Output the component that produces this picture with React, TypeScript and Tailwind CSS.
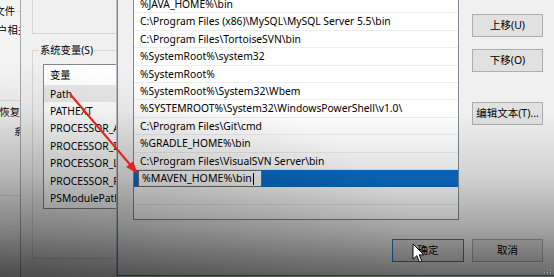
import React from 'react';

const paths = [
  '%JAVA_HOME%\\bin',
  'C:\\Program Files (x86)\\MySQL\\MySQL Server 5.5\\bin',
  'C:\\Program Files\\TortoiseSVN\\bin',
  '%SystemRoot%\\system32',
  '%SystemRoot%',
  '%SystemRoot%\\System32\\Wbem',
  '%SYSTEMROOT%\\System32\\WindowsPowerShell\\v1.0\\',
  'C:\\Program Files\\Git\\cmd',
  '%GRADLE_HOME%\\bin',
  'C:\\Program Files\\VisualSVN Server\\bin',
];

const sysVars = ['Path', 'PATHEXT', 'PROCESSOR_ARCHITECTURE', 'PROCESSOR_IDENTIFIER', 'PROCESSOR_LEVEL', 'PROCESSOR_REVISION', 'PSModulePath'];

function WinButton({ label, width = 'w-[71px]', focused = false }: { label: string; width?: string; focused?: boolean }) {
  return (
    <div
      className={`flex h-[23px] ${width} items-center justify-center border bg-[#e1e1e1] text-[10.5px] text-black ${
        focused ? 'border-[#2f7ccf]' : 'border-[#adadad]'
      }`}
    >
      {label}
    </div>
  );
}

export default function App() {
  return (
    <div className="relative h-[277px] w-[554px] overflow-hidden bg-[#f0f0f0] font-['Noto_Sans','Noto_Sans_CJK_SC',sans-serif] text-[10.3px] leading-none text-black">
      {/* back window: system properties */}
      <div className="absolute left-0 top-0 flex h-full w-[20px] flex-col overflow-hidden bg-[#f4f4f4]">
        <div className="mt-[4px] flex h-[14px] items-center justify-end">
          <span className="whitespace-nowrap">用户配置文件</span>
          <div className="ml-[2px] h-px w-[3px] shrink-0 bg-[#dcdcdc]" />
        </div>
        <div className="mt-[5px] flex h-[14px] items-center justify-end">
          <span className="-mr-[8px] whitespace-nowrap">用户相关</span>
        </div>
        <div className="mt-[63px] h-px w-full bg-[#dcdcdc]" />
        <div className="mt-[4px] flex h-[14px] items-center justify-end">
          <span className="whitespace-nowrap">启动和故障恢复</span>
        </div>
        <div className="mt-[5px] flex h-[14px] items-center">
          <span className="ml-[14px] whitespace-nowrap text-[9px]">系统失败</span>
        </div>
        <div className="mt-[57px] h-px w-full bg-[#dcdcdc]" />
      </div>

      {/* middle window: environment variables */}
      <div className="absolute left-[20px] top-0 flex h-full w-[110px] flex-col border-l border-[#a8a8a8] bg-[#f0f0f0]">
        <div className="ml-[11px] h-[34px] border-b border-l border-[#d5d5d5]" />
        <div className="relative ml-[11px] mt-[16px] h-[209px] border-b border-l border-t border-[#d5d5d5]">
          <span className="absolute -top-[6px] left-[6px] bg-[#f0f0f0] px-px">系统变量(S)</span>
          <div className="ml-[10px] mt-[13px] h-[145px] w-[120px] border border-[#828790] bg-white">
            <div className="flex h-[20px] items-center pl-[6px]">变量</div>
            {sysVars.map((name, i) => (
              <div
                key={name}
                className={`flex h-[17.4px] items-center whitespace-nowrap pl-[6px] ${i === 0 ? 'bg-[#e8e8e8]' : ''}`}
              >
                {name}
              </div>
            ))}
          </div>
        </div>
      </div>

      {/* front dialog: edit environment variable */}
      <div className="absolute left-[117px] top-0 flex h-[276px] w-[437px] flex-col border-b border-l border-[#5f86b8] bg-[#f0f0f0] shadow-[-1px_0_0_#b8c2cc]">
        <div className="flex pl-[15px]">
          <div className="-mt-[5px] flex h-[225px] w-[326px] flex-col overflow-hidden border border-[#828790] bg-white">
            {paths.map((p) => (
              <div key={p} className="flex h-[17.4px] shrink-0 items-center whitespace-nowrap border-b border-[#ededed] pl-[6px]">
                {p}
              </div>
            ))}
            <div className="flex h-[17.4px] shrink-0 items-stretch bg-[#0a6fcb]">
              <div className="ml-[4px] flex w-[124px] items-center border border-[#6f6f6f] bg-white pl-[3px] text-[10.6px]">
                <span className="whitespace-nowrap">%MAVEN_HOME%\bin</span>
                <span className="ml-px h-[12px] w-px bg-black" />
              </div>
            </div>
            <div className="h-[17.4px] shrink-0 border-b border-[#ededed]" />
          </div>
          <div className="ml-[13px] flex flex-col pt-[14px]">
            <WinButton label="上移(U)" />
            <div className="mt-[12px]">
              <WinButton label="下移(O)" />
            </div>
            <div className="mt-[30px]">
              <WinButton label="编辑文本(T)..." />
            </div>
          </div>
        </div>
        <div className="mt-[19px] flex justify-end gap-[8px] pr-[11px]">
          <WinButton label="确定" width="w-[72px]" focused />
          <WinButton label="取消" />
        </div>
      </div>

      {/* video vignette */}
      <div className="pointer-events-none absolute inset-0 bg-[linear-gradient(to_bottom,transparent_40%,rgba(0,0,0,0.12)_63%,rgba(0,0,0,0.32)_83%,rgba(0,0,0,0.58)_100%)]" />
      <div className="pointer-events-none absolute inset-0 bg-[radial-gradient(ellipse_at_0%_100%,rgba(0,0,0,0.28),transparent_55%)]" />

      {/* annotations */}
      <svg className="pointer-events-none absolute inset-0" width="554" height="277" viewBox="0 0 554 277">
        <line x1="70" y1="94" x2="130" y2="164.5" stroke="#e3231c" strokeWidth="2" />
        <polygon points="126.2,167 133,161.2 138,174" fill="#e3231c" />
        <g transform="translate(413 244) scale(0.95)">
          <path d="M0 0 L0 16 L4 12.3 L6.8 19 L9.3 18 L6.6 11.4 L11.5 11.4 Z" fill="#fff" stroke="#000" strokeWidth="1" strokeLinejoin="round" />
        </g>
        <g fill="#9a9a9a">
          <rect x="550" y="266" width="1" height="1" />
          <rect x="547" y="269" width="1" height="1" />
          <rect x="550" y="269" width="1" height="1" />
          <rect x="544" y="272" width="1" height="1" />
          <rect x="547" y="272" width="1" height="1" />
          <rect x="550" y="272" width="1" height="1" />
        </g>
      </svg>
    </div>
  );
}
